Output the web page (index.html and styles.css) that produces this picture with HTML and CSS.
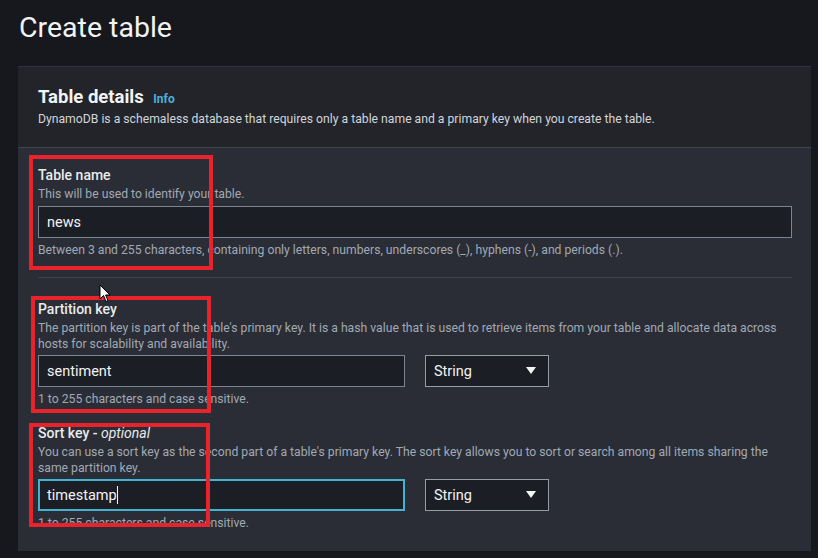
FILE: index.html
```html
<!DOCTYPE html>
<html>
<head>
<meta charset="utf-8">
<link rel="stylesheet" href="styles.css">
</head>
<body>
<div class="page">
  <h1 class="title">Create table</h1>
  <section class="card">
    <header class="card-head">
      <h2 class="card-title">Table details <a class="info">Info</a></h2>
      <p class="card-desc">DynamoDB is a schemaless database that requires only a table name and a primary key when you create the table.</p>
    </header>
    <div class="card-body">
      <div class="field">
        <div class="label">Table name</div>
        <div class="desc">This will be used to identify your table.</div>
        <div class="input wide"><span>news</span></div>
        <div class="hint">Between 3 and 255 characters, containing only letters, numbers, underscores (_), hyphens (-), and periods (.).</div>
      </div>
      <div class="divider"></div>
      <div class="field">
        <div class="label">Partition key</div>
        <div class="desc">The partition key is part of the table's primary key. It is a hash value that is used to retrieve items from your table and allocate data across hosts for scalability and availability.</div>
        <div class="row">
          <div class="input"><span>sentiment</span></div>
          <div class="select"><span>String</span><svg class="caret" width="10" height="8" viewBox="0 0 10 8"><path d="M0 0 H10 L5 7 Z" fill="#f2f3f3"/></svg></div>
        </div>
        <div class="hint">1 to 255 characters and case sensitive.</div>
      </div>
      <div class="field sort">
        <div class="label">Sort key - <i>optional</i></div>
        <div class="desc">You can use a sort key as the second part of a table's primary key. The sort key allows you to sort or search among all items sharing the same partition key.</div>
        <div class="row">
          <div class="input focus"><span>timestamp</span><span class="caret-line"></span></div>
          <div class="select"><span>String</span><svg class="caret" width="10" height="8" viewBox="0 0 10 8"><path d="M0 0 H10 L5 7 Z" fill="#f2f3f3"/></svg></div>
        </div>
        <div class="hint">1 to 255 characters and case sensitive.</div>
      </div>
    </div>
  </section>
  <div class="mark m1"></div>
  <div class="mark m2"></div>
  <div class="mark m3"></div>
  <svg class="pointer" width="12" height="19" viewBox="0 0 12 19"><path d="M1 1 L1 15 L4.5 11.5 L7 17.5 L9 16.6 L6.6 11 L11 11 Z" fill="#fff" stroke="#000" stroke-width="1"/></svg>
</div>
</body>
</html>
```
FILE: styles.css
```css
* { box-sizing: border-box; }
html, body { margin: 0; padding: 0; }
body {
  background: #16181d;
  font-family: Roboto, "Open Sans", sans-serif;
  color: #e9ebed;
  width: 818px;
  height: 558px;
  overflow: hidden;
}
.page {
  position: relative;
  padding: 0 7px 0 18px;
  height: 558px;
}
.title {
  margin: 0;
  padding: 10px 0 0 1px;
  height: 66px;
  font-size: 28.5px;
  font-weight: 400;
  line-height: 36px;
  color: #f2f3f3;
}
.card {
  width: 793px;
  background: #2a2d35;
  border-top: 1px solid #30333b;
}
.card-head {
  background: #222429;
  padding: 18px 20px 20px 20px;
  border-bottom: 1px solid #40444c;
}
.card-title {
  margin: 0;
  font-size: 18.5px;
  font-weight: 700;
  line-height: 24px;
  color: #f2f3f3;
}
.info {
  font-size: 12px;
  font-weight: 700;
  color: #4bb0da;
  margin-left: 5px;
}
.card-desc {
  margin: 0;
  font-size: 12.2px;
  line-height: 16px;
  color: #d1d5db;
}
.card-body {
  padding: 18px 19px 20px 20px;
}
.label {
  font-size: 14px;
  font-weight: 500;
  line-height: 18px;
  color: #e9ebed;
}
.label i { font-weight: 400; }
.desc {
  font-size: 12.2px;
  line-height: 16px;
  color: #a0a9b4;
  margin-top: 2px;
}
.input {
  margin-top: 4px;
  height: 32px;
  background: #1b1e24;
  border: 1px solid #7d8590;
  display: flex;
  align-items: center;
  padding-left: 8px;
  font-size: 14.5px;
  color: #f2f3f3;
}
.input.wide { width: 754px; }
.row {
  display: flex;
  gap: 20px;
  margin-top: 3px;
}
.row .input { margin-top: 0; width: 367px; }
.input.focus { border: 2px solid #44b3d1; padding-left: 7px; }
.caret-line {
  width: 1px;
  height: 18px;
  background: #f2f3f3;
}
.select {
  width: 124px;
  height: 32px;
  background: #1b1e24;
  border: 1px solid #959ca6;
  display: flex;
  align-items: center;
  justify-content: space-between;
  padding: 0 12px 0 8px;
  font-size: 14.5px;
  color: #f2f3f3;
}
.hint {
  margin-top: 4px;
  font-size: 12.2px;
  line-height: 16px;
  color: #a0a9b4;
}
.divider {
  height: 1px;
  background: #40444c;
  margin: 19px 0 22px;
}
.sort { margin-top: 17px; }
.mark {
  position: absolute;
  border: 4px solid #e8232b;
}
.m1 { left: 29px; top: 155px; width: 184px; height: 115px; }
.m2 { left: 31px; top: 296px; width: 180px; height: 117px; }
.m3 { left: 29px; top: 423px; width: 181px; height: 104px; }
.pointer { position: absolute; left: 99px; top: 284px; }
```
